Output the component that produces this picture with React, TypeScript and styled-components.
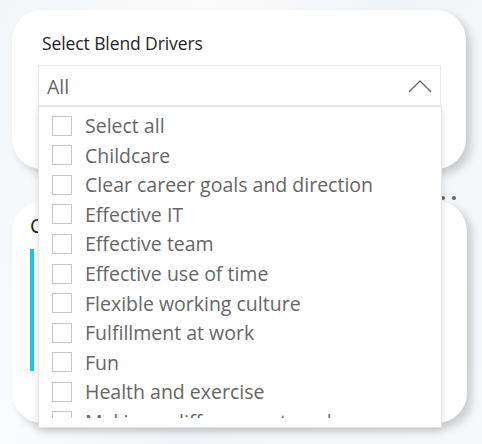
import React from "react";
import styled, { createGlobalStyle } from "styled-components";

const Global = createGlobalStyle`
  html, body { margin: 0; padding: 0; }
  body {
    font-family: "Open Sans", "Noto Sans", "Liberation Sans", sans-serif;
    background: #f5f8fb;
  }
`;

const Page = styled.div`
  width: 482px;
  height: 444px;
  overflow: hidden;
  box-sizing: border-box;
  padding: 10px 0 0 12px;
  background: linear-gradient(115deg, #f2f6f9 0%, #fbfcfd 30%, #f1f5f9 55%, #f6f9fb 100%);
  display: flex;
  flex-direction: column;
`;

const Card = styled.div<{ $h: number; $w: number }>`
  width: ${(p) => p.$w}px;
  height: ${(p) => p.$h}px;
  box-sizing: border-box;
  background: #ffffff;
  border-radius: 30px;
  box-shadow: 5px 5px 8px rgba(0, 0, 0, 0.18);
`;

const SlicerCard = styled(Card)`
  padding: 21px 25px 0 26px;
  display: flex;
  flex-direction: column;
`;

const Title = styled.div`
  font-size: 17.5px;
  color: #252423;
  height: 34px;
  line-height: 24px;
  padding-left: 4px;
  letter-spacing: -0.1px;
`;

const DropWrap = styled.div`
  position: relative;
`;

const Header = styled.div`
  height: 41px;
  box-sizing: border-box;
  border: 1px solid #e9e9e9;
  display: flex;
  align-items: center;
  justify-content: space-between;
  padding: 1px 8px 0 8px;
  color: #666666;
  font-size: 19.5px;
`;

const Popup = styled.div`
  position: absolute;
  z-index: 10;
  top: 41px;
  left: 0;
  width: 404px;
  height: 322px;
  box-sizing: border-box;
  background: #ffffff;
  border: 1px solid #e6e6e6;
  box-shadow: 0 4px 8px rgba(0, 0, 0, 0.12);
  padding: 4px 0 9px 13px;
`;

const List = styled.div`
  height: 100%;
  overflow: hidden;
`;

const Row = styled.div`
  height: 29.55px;
  display: flex;
  align-items: center;
  gap: 13px;
  color: #666666;
  font-size: 19.5px;
  white-space: nowrap;
`;

const Box = styled.span`
  width: 20px;
  height: 20px;
  box-sizing: border-box;
  border: 1px solid #c6c6c6;
  flex: none;
`;

const Gap = styled.div`
  height: 32px;
  width: 456px;
  display: flex;
  justify-content: flex-end;
  align-items: flex-end;
  gap: 7px;
  padding: 0 12px 1px 0;
  box-sizing: border-box;
`;

const Dot = styled.span`
  width: 4px;
  height: 4px;
  border-radius: 50%;
  background: #666;
`;

const ChartCard = styled(Card)`
  padding: 13px 0 0 18px;
  display: flex;
  flex-direction: column;
  gap: 11px;
`;

const ChartTitle = styled.div`
  font-size: 20px;
  color: #252423;
  line-height: 24px;
`;

const Bar = styled.div`
  width: 4px;
  height: 122px;
  background: #1cc8e6;
`;

const items = [
  "Select all",
  "Childcare",
  "Clear career goals and direction",
  "Effective IT",
  "Effective team",
  "Effective use of time",
  "Flexible working culture",
  "Fulfillment at work",
  "Fun",
  "Health and exercise",
  "Making a difference at work",
];

export default function App() {
  return (
    <>
      <Global />
      <Page>
        <SlicerCard $w={454} $h={159}>
          <Title>Select Blend Drivers</Title>
          <DropWrap>
            <Header>
              <span>All</span>
              <svg width="24" height="14" viewBox="0 0 24 14">
                <polyline points="1,13 12,2 23,13" fill="none" stroke="#666" strokeWidth="1.3" />
              </svg>
            </Header>
            <Popup>
              <List>
                {items.map((t) => (
                  <Row key={t}>
                    <Box />
                    <span>{t}</span>
                  </Row>
                ))}
              </List>
            </Popup>
          </DropWrap>
        </SlicerCard>
        <Gap>
          <Dot />
          <Dot />
        </Gap>
        <ChartCard $w={455} $h={222}>
          <ChartTitle>C</ChartTitle>
          <Bar />
        </ChartCard>
      </Page>
    </>
  );
}
